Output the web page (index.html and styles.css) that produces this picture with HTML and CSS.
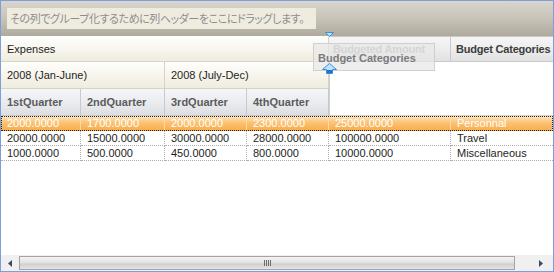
FILE: index.html
```html
<!DOCTYPE html>
<html lang="ja">
<head>
    <meta charset="UTF-8">
    <title>Grid</title>
    <link rel="stylesheet" href="styles.css">
</head>
<body>
<div class="grid">
    <div class="group-panel">
        <div class="group-hint">その列でグループ化するために列ヘッダーをここにドラッグします。</div>
    </div>

    <div class="header">
        <div class="hc band top expenses">Expenses</div>
        <div class="hc col amount">Budgeted Amount</div>
        <div class="hc col categories">Budget Categories</div>
        <div class="hc band half1">2008 (Jan-June)</div>
        <div class="hc band half2">2008 (July-Dec)</div>
        <div class="empty"></div>
        <div class="hc quarter">1stQuarter</div>
        <div class="hc quarter">2ndQuarter</div>
        <div class="hc quarter">3rdQuarter</div>
        <div class="hc quarter">4thQuarter</div>
    </div>

    <div class="rows">
        <div class="row selected">
            <div class="cell">2000.0000</div>
            <div class="cell">1700.0000</div>
            <div class="cell">2000.0000</div>
            <div class="cell">2300.0000</div>
            <div class="cell">25000.0000</div>
            <div class="cell">Personnal</div>
        </div>
        <div class="row">
            <div class="cell">20000.0000</div>
            <div class="cell">15000.0000</div>
            <div class="cell">30000.0000</div>
            <div class="cell">28000.0000</div>
            <div class="cell">100000.0000</div>
            <div class="cell">Travel</div>
        </div>
        <div class="row">
            <div class="cell">1000.0000</div>
            <div class="cell">500.0000</div>
            <div class="cell">450.0000</div>
            <div class="cell">800.0000</div>
            <div class="cell">10000.0000</div>
            <div class="cell">Miscellaneous</div>
        </div>
    </div>

    <div class="hscroll">
        <div class="sb-btn left">
            <svg width="5" height="7" viewBox="0 0 5 7"><path d="M4 0 L0 3.5 L4 7 Z" fill="#3b4a6b"/></svg>
        </div>
        <div class="sb-thumb"><span class="grip"></span></div>
        <div class="sb-rest">
            <svg width="5" height="7" viewBox="0 0 5 7"><path d="M0 0 L4 3.5 L0 7 Z" fill="#3b4a6b"/></svg>
        </div>
    </div>

    <!-- drag cue over the header -->
    <div class="drag-ghost">Budget Categories</div>
    <svg class="cue cue-down" width="9" height="5" viewBox="0 0 9 5">
        <path d="M0.5 0.5 H8.5 L4.5 4.5 Z" fill="#bfe3fb" stroke="#3d8fd6"/>
    </svg>
    <svg class="cue cue-up" width="15" height="11" viewBox="0 0 15 11">
        <path d="M7.5 0.5 L14.5 6.5 H10.5 V10.5 H4.5 V6.5 H0.5 Z" fill="#bfe3fb" stroke="#3d8fd6"/>
        <path d="M5 7 H10 V10 H5 Z" fill="#1f74d0"/>
    </svg>
</div>
</body>
</html>
```

FILE: styles.css
```css
* {
    margin: 0;
    padding: 0;
    box-sizing: border-box;
}

body {
    font-family: 'Liberation Sans', Arial, sans-serif;
    font-size: 11px;
    color: #1e1e1e;
    background: #fff;
}

.grid {
    position: relative;
    width: 554px;
    height: 272px;
    border: 1px solid #7f9ddb;
    display: flex;
    flex-direction: column;
    overflow: hidden;
}

.group-panel {
    height: 35px;
    padding: 7px 6px 0 6px;
    background: linear-gradient(180deg, #d8d5cc 0%, #c7c3b8 50%, #aeaa9d 100%);
}

.group-hint {
    display: inline-block;
    height: 21px;
    width: 309px;
    padding: 0 3px;
    line-height: 21px;
    background: #eeecdf;
    color: #8e8e8e;
    font-family: 'Noto Sans CJK JP', sans-serif;
    font-size: 11px;
    font-feature-settings: 'palt';
    letter-spacing: -0.42px;
    white-space: nowrap;
    overflow: hidden;
}

.header {
    display: grid;
    grid-template-columns: 80px 84px 82px 82px 122px 102px;
    grid-template-rows: 26px 27px 27px;
}

.hc {
    display: flex;
    align-items: center;
    padding: 0 6px;
    white-space: nowrap;
    border-right: 1px solid #d6d3c8;
    border-bottom: 1px solid #d6d3c8;
}

.band {
    background: linear-gradient(180deg, #fefefc 0%, #f7f5ed 50%, #efeddf 100%);
}

.expenses {
    grid-column: 1 / 5;
    border-top: 1px solid #fff;
}

.half1 {
    grid-column: 1 / 3;
}

.half2 {
    grid-column: 3 / 5;
}

.col {
    background: linear-gradient(180deg, #f6f6f6 0%, #ececec 55%, #e1e1e1 100%);
    border-top: 1px solid #c9c9c9;
    border-right: 1px solid #c9c9c9;
    border-bottom: 1px solid #c9c9c9;
    font-weight: bold;
    color: #3c3c3c;
    padding-left: 5px;
    letter-spacing: -0.2px;
}

.amount {
    color: #a3a3a3;
    padding-left: 4px;
}

.categories {
    border-right: none;
}

.empty {
    grid-column: 5 / 7;
    grid-row: 2 / 4;
    background: #fff;
    border-left: 1px solid #cfcfcf;
    border-bottom: 1px solid #d6d3c8;
}

.quarter {
    background: linear-gradient(180deg, #f5f6f8 0%, #e9ebee 55%, #dcdee2 100%);
    border-right: 1px solid #c8c9cc;
    border-bottom: 1px solid #c8c9cc;
    font-weight: bold;
    color: #5b5b5b;
}

.rows {
    flex: 1;
}

.row {
    display: grid;
    grid-template-columns: 80px 84px 82px 82px 122px 102px;
    height: 15px;
}

.cell {
    padding: 0 6px;
    line-height: 14px;
    border-right: 1px dotted #aeaeae;
    border-bottom: 1px dotted #aeaeae;
    white-space: nowrap;
    overflow: hidden;
}

.cell:last-child {
    border-right: none;
}

.row.selected {
    background: linear-gradient(180deg, #fde9c4 0%, #fbc57a 40%, #f8aa45 100%);
    outline: 1px dotted #222;
    outline-offset: -1px;
    color: #fff;
}

.row.selected .cell {
    border-right: 1px solid #fbd9a8;
    border-bottom: none;
}

.hscroll {
    height: 16px;
    display: flex;
    background: #f0f0f0;
}

.sb-btn {
    width: 18px;
    display: flex;
    align-items: center;
    justify-content: center;
}

.sb-thumb {
    width: 496px;
    margin: 1px 0;
    border: 1px solid #a4a4a4;
    background: linear-gradient(180deg, #f4f4f4 0%, #e3e3e3 45%, #cfcfcf 60%, #e4e4e4 100%);
    display: flex;
    align-items: center;
    justify-content: center;
}

.grip {
    width: 7px;
    height: 6px;
    background: repeating-linear-gradient(90deg, #6b6b6b 0 1px, transparent 1px 2px);
}

.sb-rest {
    flex: 1;
    display: flex;
    align-items: center;
    justify-content: flex-end;
    padding-right: 9px;
}

.drag-ghost {
    position: absolute;
    left: 312px;
    top: 42px;
    width: 122px;
    height: 28px;
    padding: 8px 0 0 4px;
    background: rgba(232, 232, 232, 0.72);
    border: 1px solid rgba(200, 200, 200, 0.8);
    color: #7b7b7b;
    font-weight: bold;
    white-space: nowrap;
}

.cue {
    position: absolute;
    display: block;
}

.cue-down {
    left: 324px;
    top: 31px;
}

.cue-up {
    left: 321px;
    top: 62px;
}
```
